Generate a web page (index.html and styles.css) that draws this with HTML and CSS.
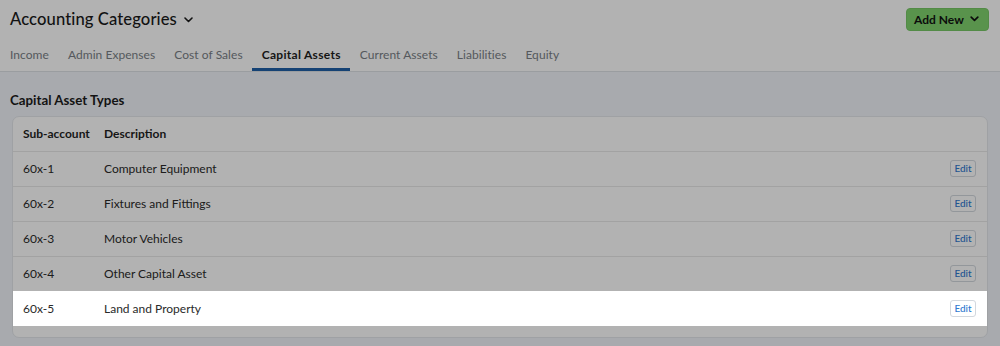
FILE: index.html
```html
<!DOCTYPE html>
<html lang="en">
<head>
<meta charset="utf-8">
<title>Accounting Categories</title>
<link rel="stylesheet" href="styles.css">
</head>
<body>
<header class="topbar">
  <div class="title-row">
    <h1 class="page-title">Accounting Categories
      <svg class="chev" width="9" height="6" viewBox="0 0 9 6"><polyline points="1,1 4.5,4.5 8,1" fill="none" stroke="currentColor" stroke-width="1.6" stroke-linecap="round" stroke-linejoin="round"/></svg>
    </h1>
    <button class="btn-add">Add New
      <svg class="chev-sm" width="9" height="6" viewBox="0 0 9 6"><polyline points="1.2,1.2 4.5,4.4 7.8,1.2" fill="none" stroke="currentColor" stroke-width="1.7" stroke-linecap="round" stroke-linejoin="round"/></svg>
    </button>
  </div>
  <nav class="tabs">
    <a class="tab">Income</a>
    <a class="tab">Admin Expenses</a>
    <a class="tab">Cost of Sales</a>
    <a class="tab active">Capital Assets</a>
    <a class="tab">Current Assets</a>
    <a class="tab">Liabilities</a>
    <a class="tab">Equity</a>
  </nav>
</header>
<main class="content">
  <h2 class="section-title">Capital Asset Types</h2>
  <div class="card">
    <div class="row head">
      <div class="c-code">Sub-account</div>
      <div class="c-desc">Description</div>
    </div>
    <div class="row"><div class="c-code">60x-1</div><div class="c-desc">Computer Equipment</div><div class="c-act"><button class="btn-edit">Edit</button></div></div>
    <div class="row"><div class="c-code">60x-2</div><div class="c-desc">Fixtures and Fittings</div><div class="c-act"><button class="btn-edit">Edit</button></div></div>
    <div class="row"><div class="c-code">60x-3</div><div class="c-desc">Motor Vehicles</div><div class="c-act"><button class="btn-edit">Edit</button></div></div>
    <div class="row"><div class="c-code">60x-4</div><div class="c-desc">Other Capital Asset</div><div class="c-act"><button class="btn-edit">Edit</button></div></div>
    <div class="row spotlight"><div class="c-code">60x-5</div><div class="c-desc">Land and Property</div><div class="c-act"><button class="btn-edit">Edit</button></div></div>
  </div>
</main>
</body>
</html>
```

FILE: styles.css
```css
* { box-sizing: border-box; }
html, body { margin: 0; height: 100%; }
body {
  font-family: Lato, "Open Sans", Arial, sans-serif;
  background: #f1f4f9;
  color: #222;
  overflow: hidden;
}
.topbar {
  background: #fff;
  border-bottom: 1px solid #dde1e6;
  padding: 0 11px 0 0.5px;
}
.title-row {
  display: flex;
  justify-content: space-between;
  align-items: center;
  height: 37px;
  padding-left: 9.5px;
}
.page-title {
  margin: 0;
  font-size: 16.6px;
  font-weight: 500;
  color: #1a1a1a;
  display: flex;
  align-items: center;
  gap: 7px;
  letter-spacing: 0.1px;
}
.chev { margin-top: 2px; }
.btn-add {
  font-family: inherit;
  font-size: 12px;
  font-weight: 700;
  color: #111;
  background: #80d36d;
  border: 1px solid #78c866;
  border-radius: 4px;
  height: 23px;
  width: 83px;
  padding: 0 9px 0 7px;
  display: flex;
  align-items: center;
  justify-content: space-between;
  margin-top: 1px;
}
.tabs {
  display: flex;
}
.tab {
  font-size: 12px;
  line-height: 16px;
  color: #7a7f86;
  padding: 10px 9.5px 5px;
  border-bottom: 3px solid transparent;
  letter-spacing: 0.05px;
}
.tab.active {
  color: #1e1e1e;
  font-weight: 700;
  border-bottom-color: #1f5fa6;
  letter-spacing: 0.3px;
}
.content {
  padding: 0 12px;
}
.section-title {
  margin: 18px 0 6px -2px;
  font-size: 13.3px;
  line-height: 20px;
  font-weight: 700;
  color: #1c1c1c;
}
.card {
  background: #fff;
  border: 1px solid #e4e7eb;
  border-radius: 7px;
  padding-bottom: 11px;
}
.row {
  display: flex;
  align-items: center;
  height: 35px;
  padding-bottom: 2px;
  border-top: 1px solid #e8e8e8;
  font-size: 12px;
  color: #2a2a2a;
}
.row.head {
  border-top: none;
  height: 34px;
  font-weight: 700;
  color: #1f1f1f;
}
.c-code { width: 91px; padding-left: 10px; }
.c-desc { flex: 1; }
.c-act { padding-right: 11px; }
.btn-edit {
  font-family: inherit;
  font-size: 10px;
  font-weight: 500;
  color: #2f7ad0;
  background: #fff;
  border: 1px solid #d3d8de;
  border-radius: 3px;
  height: 17px;
  width: 26px;
  padding: 0;
  line-height: 15px;
}
.spotlight {
  position: relative;
  z-index: 10;
  background: #fff;
  border-top-color: #fff;
  box-shadow: 0 0 0 3000px rgba(0, 0, 0, 0.3);
}
```
